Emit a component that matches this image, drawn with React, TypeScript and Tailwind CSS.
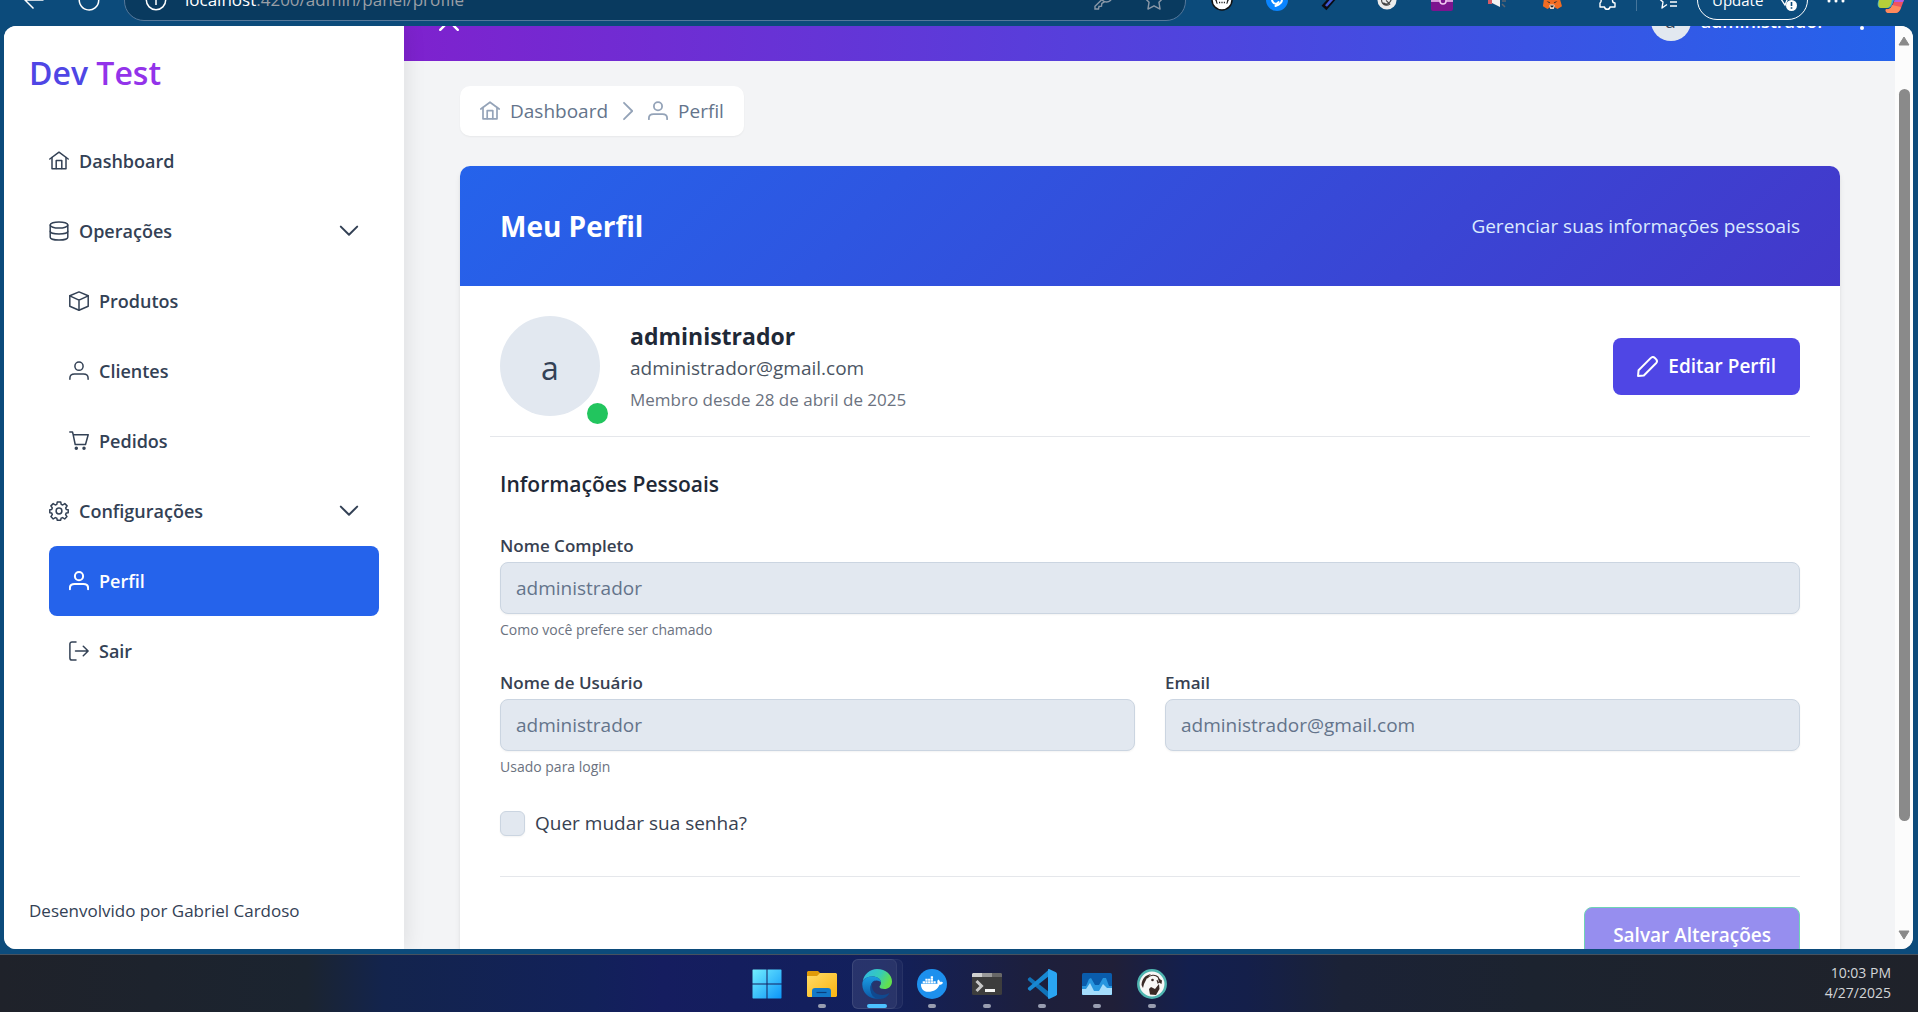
import type { ReactNode } from "react";
import { FaDocker } from "react-icons/fa";

type IconProps = { className?: string; d: ReactNode; width?: number };

function Glyph({ className = "size-5", d, width = 1.5 }: IconProps) {
  return (
    <svg viewBox="0 0 20 20" fill="none" stroke="currentColor" strokeWidth={width} strokeLinecap="round" strokeLinejoin="round" className={"shrink-0 " + className} aria-hidden="true">
      {d}
    </svg>
  );
}

const home = (
  <>
    <path d="M.8 8 10 1.2 19.2 8" />
    <path d="M3 6.6V17.8H17V6.6" />
    <path d="M7.2 17.6V9.6h5.6v8" />
  </>
);
const database = (
  <>
    <ellipse cx="10" cy="4" rx="8.8" ry="3.1" />
    <path d="M1.2 4v12.2c0 1.600 3.900 2.900 8.800 2.900s8.800-1.300 8.800-2.900V4" />
    <path d="M1.200 10.200c0 1.600 3.900 2.800 8.800 2.800s8.800-1.200 8.800-2.800" />
  </>
);
const box = (
  <>
    <path d="M10 .9 19.200 4.800v10.400L10 19.200.8 15.200V4.800z" />
    <path d="M.8 4.900 10 9.100l9.200-4.200M10 9.100v10" />
  </>
);
const user = (
  <>
    <circle cx="10" cy="5.200" r="4.100" />
    <path d="M.9 18.200v-1.100c0-2.500 2.100-4 4.700-4h8.800c2.600 0 4.700 1.500 4.700 4v1.100" />
  </>
);
const cart = (
  <>
    <path d="M.8 1h2.700l.6 2.300L6.200 13.500H16.500L19.200 3.700H4.200" />
    <circle cx="7.300" cy="17.300" r="1" fill="currentColor" />
    <circle cx="15" cy="17.300" r="1" fill="currentColor" />
  </>
);
const cog = (
  <>
    <circle cx="10" cy="10" r="2.900" />
    <path d="M8.300.9h3.400l.5 2.500 1.500.6 2.100-1.400 2.300 2.300L16.700 7l.6 1.500 1.900.3v2.900l-2 .4-.6 1.500 1.400 2-2.300 2.400-2.100-1.400-1.500.6-.4 2H8.300l-.5-2-1.500-.6L4.200 18l-2.300-2.400 1.400-2-.6-1.500-1.900-.4V8.800l1.900-.3L3.300 7 1.900 4.900l2.300-2.300L6.300 4l1.500-.6z" />
  </>
);
const signOut = (
  <>
    <path d="M7 .9H3C1.800.9.900 1.800.900 3v14c0 1.200.9 2.100 2.100 2.100h4" />
    <path d="M6.500 10H19M14.300 5.200 19.100 10l-4.800 4.800" />
  </>
);
const pencil = <path d="M1 19l.5-5.500L13 2c1.300-1.300 2.800-1.200 4-.1l1.100 1.100c1.200 1.200 1.200 2.600 0 3.900L6.500 18.500z" />;
const chevronDown = <path d="M1.800 5.600 10 13.700l8.200-8.100" />;
const chevronRight = <path d="M6 1.800 14.200 10 6 18.200" />;

function NavItem({ icon, label, kind }: { icon: ReactNode; label: string; kind?: "group" | "child" | "active" }) {
  const inner = (
    <>
      <Glyph d={icon} width={kind === "active" ? 2 : 1.5} />
      <span className="flex-1 text-left">{label}</span>
    </>
  );
  if (kind === "group") {
    return (
      <li>
        <button type="button" className="flex h-[70px] w-full items-center gap-[10px] pr-5">
          {inner}
          <Glyph d={chevronDown} width={2} />
        </button>
      </li>
    );
  }
  if (kind === "active") {
    return (
      <li>
        <a href="#perfil" aria-current="page" className="flex h-[70px] items-center gap-[10px] rounded-lg bg-[#2563eb] px-5 text-white">
          {inner}
        </a>
      </li>
    );
  }
  return (
    <li>
      <a href={"#" + label.toLowerCase()} className={kind === "child" ? "flex h-[70px] items-center gap-[10px] px-5" : "flex h-[70px] items-center gap-[10px]"}>
        {inner}
      </a>
    </li>
  );
}

function Field({ id, label, value, hint }: { id: string; label: string; value: string; hint?: string }) {
  return (
    <div className="min-w-0">
      <label htmlFor={id} className="block text-[17px] leading-6 font-semibold text-[#374151]">
        {label}
      </label>
      <input id={id} disabled defaultValue={value} className="mt-1 block h-[52px] w-full rounded-lg border border-[#cbd5e1] bg-[#e2e8f0] px-[15px] text-[19px] text-[#64748b] shadow-xs" />
      {hint && <p className="mt-[5px] text-[14px] leading-[21px] text-[#6b7280]">{hint}</p>}
    </div>
  );
}

function ExtCell({ label, children }: { label: string; children: ReactNode }) {
  return (
    <button type="button" aria-label={label} className="flex w-[55px] shrink-0 items-center justify-center">
      {children}
    </button>
  );
}

function BrowserBar() {
  return (
    <div className="h-[26px] shrink-0 overflow-hidden bg-[#0c4b7b]">
      <div className="-mt-[26px] flex h-[52px] items-center text-white">
        <button type="button" aria-label="Back" className="ml-6">
          <svg viewBox="0 0 20 20" className="size-5" fill="none" stroke="currentColor" strokeWidth="1.500"><path d="M19.500 10H1M9.500 1.500 1 10l8.500 8.500" /></svg>
        </button>
        <button type="button" aria-label="Reload" className="ml-[34px]">
          <svg viewBox="0 0 22 22" className="size-[22px]" fill="none" stroke="currentColor" strokeWidth="1.500"><path d="M18 4.500A9.700 9.700 0 1 0 20.700 11M18.500 0v5h-5" /></svg>
        </button>
        <div className="ml-6 flex h-[42px] min-w-0 flex-1 items-center rounded-[20px] border border-[#56789a] bg-[#093a5f] pr-[20px] pl-5">
          <svg viewBox="0 0 22 22" className="size-[22px] shrink-0" fill="none" stroke="currentColor" strokeWidth="1.500"><circle cx="11" cy="11" r="9.700" /><path d="M11 10v6M11 6v1.500" /></svg>
          <span className="ml-[18px] flex-1 text-[17px] whitespace-nowrap">
            localhost<span className="text-[#9a9fa6]">:4200/admin/panel/profile</span>
          </span>
          <svg viewBox="0 0 20 20" className="mr-[30px] size-5" fill="none" stroke="#8a98a8" strokeWidth="1.400"><circle cx="13.500" cy="6.500" r="5.500" /><path d="M9 9.500 2 16.200V19h3.500l.5-2.500 2.500-.3.300-2.700 2.700-1.700" /></svg>
          <svg viewBox="0 0 20 20" className="size-[22px]" fill="none" stroke="#8a98a8" strokeWidth="1.300" strokeLinejoin="round"><path d="m10 1 2.800 5.700 6.200.9-4.500 4.400 1 6.200L10 15.300l-5.500 2.900 1-6.200L1 7.600l6.200-.9z" /></svg>
        </div>
        <div className="ml-2 flex shrink-0 items-center">
          <ExtCell label="JSON viewer">
            <svg viewBox="0 0 22 22" className="size-[22px]"><circle cx="11" cy="11" r="10" fill="#fff" stroke="#111" strokeWidth="1.500" /><path d="M6.500 8.500c-1 0-.5 2-1.500 3 1 1 .5 3 1.500 3M15.500 8.500c1 0 .5 2 1.500 3-1 1-.5 3-1.500 3" fill="none" stroke="#222" strokeWidth="1.200" /><path d="M8 13.500h1.200m1.200 0h1.200m1.200 0H14" stroke="#222" strokeWidth="1.500" /></svg>
          </ExtCell>
          <ExtCell label="Shazam">
            <svg viewBox="0 0 22 22" className="size-[22px]"><circle cx="11" cy="11" r="11" fill="#0a84ff" /><path d="M12.500 5C8 6.500 5 9.500 6.500 12.500S11 15 12.500 13M9.500 17c4.500-1.500 7.500-4.500 6-7.500S11 7 9.500 9" fill="none" stroke="#fff" strokeWidth="2" strokeLinecap="round" /></svg>
          </ExtCell>
          <ExtCell label="Color picker">
            <svg viewBox="0 0 22 22" className="size-[22px]"><path d="M3 19 17 3" stroke="#0b0b12" strokeWidth="6.500" /><path d="M5 17 13 8" stroke="#4258d6" strokeWidth="2.600" /></svg>
          </ExtCell>
          <ExtCell label="Grammar checker">
            <svg viewBox="0 0 22 22" className="size-5"><circle cx="11" cy="11" r="10.500" fill="#ececec" /><path d="M15 8a5.500 5.500 0 1 0-1 7.500l-4-4M7 14c3 3 8 1 9-5" fill="none" stroke="#444" strokeWidth="1.300" /></svg>
          </ExtCell>
          <ExtCell label="Clipper">
            <svg viewBox="0 0 22 22" className="size-[22px]"><rect width="22" height="22" rx="2" fill="#7d148f" /><path d="M0 12h22V2H0z" fill="#a326ae" /><path d="M0 12h22" stroke="#f0c8f0" strokeWidth="1.500" /><circle cx="12" cy="12" r="3" fill="#7d148f" stroke="#f0c8f0" strokeWidth="1.500" /></svg>
          </ExtCell>
          <ExtCell label="Volume">
            <svg viewBox="0 0 22 22" className="size-[22px]"><path d="M2 8h4v7H2z" fill="#d65b65" /><path d="M6 8 14 2v16l-8-4z" fill="#f4f1f1" /><path d="m16 8 4-2m-4 6h4m-4 3 3 3" stroke="#5c6470" strokeWidth="1.500" /></svg>
          </ExtCell>
          <ExtCell label="Wallet">
            <svg viewBox="0 0 22 22" className="size-5"><path d="m1 1 7 4h6l7-4-1 10 2 7-5 3-3-2h-5l-3 2-5-3 1-7z" fill="#f26c22" /><path d="m5 12 4 1.500-1 1zm12 0-4 1.500 1 1z" fill="#2a2a2a" /><path d="m8 17 1-1h4l1 1-1 4H9z" fill="#e8d6c8" /><path d="M9 17h4l-1 2h-2z" fill="#222" /></svg>
          </ExtCell>
          <ExtCell label="Extensions">
            <svg viewBox="0 0 22 22" className="size-[22px]" fill="none" stroke="#fff" strokeWidth="1.400" strokeLinejoin="round"><path d="M3 4h5a3 3 0 0 1 6 0h5v5a2.500 2.500 0 0 0 0 5v4h-5a2.800 2.800 0 0 1-5.500 0H4v-4a2.800 2.800 0 0 0-1-5z" /></svg>
          </ExtCell>
          <div className="mx-[2px] h-[22px] w-px bg-[#46759b]" />
          <ExtCell label="Favorites">
            <svg viewBox="0 0 22 22" className="size-[22px]" fill="none" stroke="#fff" strokeWidth="1.400" strokeLinejoin="round"><path d="M11 15.500 6 19l1-6-5-4.500 6-1L11 2l3 5 6 1M14 13h7M14 17h7" /></svg>
          </ExtCell>
          <button type="button" className="ml-[3px] flex h-10 w-[111px] items-center justify-between rounded-full border border-white pr-[9px] pl-[14px] text-[15px]">
            Update
            <svg viewBox="0 0 24 24" className="size-6"><path d="M2 8 12 3l7 6M5 8l6 9 4-10" fill="none" stroke="#fff" strokeWidth="1.300" /><circle cx="17.500" cy="17.500" r="5.500" fill="#fff" /><path d="M17.500 14v4m0 1.300v1.500" stroke="#0c4b7b" strokeWidth="1.600" /></svg>
          </button>
          <ExtCell label="More">
            <svg viewBox="0 0 20 20" className="size-5" fill="#fff"><circle cx="3" cy="11" r="1.500" /><circle cx="10" cy="11" r="1.500" /><circle cx="17" cy="11" r="1.500" /></svg>
          </ExtCell>
          <ExtCell label="Copilot">
            <svg viewBox="0 0 28 28" className="size-7"><path d="M8 2h9c3 0 3 3 2 6l-3 9c-1 3-3 5-6 5H4c-3 0-4-3-3-6L4 6c1-2 2-4 4-4z" fill="#3fa9d6" /><path d="M2 14h13l-1 4c-1 2-2 4-5 4H4c-3 0-3-4-2-8z" fill="#b5cf3a" /><path d="M20 8h4c3 0 4 3 3 6l-3 8c-1 3-3 5-6 5h-6c-3 0-4-2-3-4h2c3 0 4-2 5-5z" fill="#f0525f" /><path d="M20 8h4c3 0 4 3 3 6l-1 2h-9z" fill="#b05de5" /><path d="M9 23c3 1 5-1 6-4l9 2c-1 4-3 6-6 6h-6c-3 0-4-2-3-4z" fill="#ff8a5c" /></svg>
          </ExtCell>
        </div>
      </div>
    </div>
  );
}

function Sidebar() {
  return (
    <aside className="z-10 flex w-[400px] shrink-0 flex-col bg-white pr-[25px] pb-[26px] pl-[25px] text-[#334155] shadow-[4px_0_18px_rgba(0,0,0,0.08)]">
      <h1 className="mt-[22px] text-[32px] leading-[50px] font-semibold">
        <span className="text-[#4f46e5]">Dev</span> <span className="text-[#9333ea]">Test</span>
      </h1>
      <nav className="mt-7 pl-5 text-[18px] font-semibold">
        <ul>
          <NavItem icon={home} label="Dashboard" />
          <NavItem icon={database} label="Operações" kind="group" />
          <NavItem icon={box} label="Produtos" kind="child" />
          <NavItem icon={user} label="Clientes" kind="child" />
          <NavItem icon={cart} label="Pedidos" kind="child" />
          <NavItem icon={cog} label="Configurações" kind="group" />
          <NavItem icon={user} label="Perfil" kind="active" />
          <NavItem icon={signOut} label="Sair" kind="child" />
        </ul>
      </nav>
      <p className="mt-auto text-[17px] leading-6">Desenvolvido por Gabriel Cardoso</p>
    </aside>
  );
}

function TopBar() {
  return (
    <header className="flex h-20 items-center bg-[linear-gradient(90deg,#7e22ce,#2563eb)] pr-[28px] pl-[34px] text-white">
      <button type="button" aria-label="Fechar menu">
        <Glyph className="size-[22px]" width={2.2} d={<path d="m2 2 16 16M18 2 2 18" />} />
      </button>
      <div className="ml-auto flex items-center gap-[10px]">
        <span className="flex size-10 items-center justify-center rounded-full bg-[#e2e8f0] text-[19px] text-[#334155]">a</span>
        <span className="text-[18px] font-semibold">administrador</span>
        <button type="button" aria-label="Opções" className="ml-[22px]">
          <svg viewBox="0 0 10 20" className="h-5 w-[10px]" fill="currentColor"><circle cx="5" cy="3" r="2" /><circle cx="5" cy="10" r="2" /><circle cx="5" cy="17" r="2" /></svg>
        </button>
      </div>
    </header>
  );
}

function ProfileCard() {
  return (
    <section className="mt-[30px] rounded-[10px] bg-white pb-10 shadow-md">
      <div className="flex h-[120px] items-center justify-between rounded-t-[10px] bg-[linear-gradient(135deg,#2563eb,#4338ca)] px-10">
        <h2 className="text-[28px] font-bold text-white">Meu Perfil</h2>
        <p className="text-[19px] text-[#dbeafe]">Gerenciar suas informações pessoais</p>
      </div>
      <div className="px-[30px] pt-[30px]">
        <div className="flex items-center border-b border-[#e5e7eb] px-[10px] pb-5">
          <div className="relative flex size-[100px] shrink-0 items-center justify-center rounded-full bg-[#e2e8f0] pt-1 text-[32px] text-[#334155]">
            a
            <span className="absolute -right-2 -bottom-2 size-[21px] rounded-full bg-[#22c55e]" />
          </div>
          <div className="ml-[30px] flex-1 pt-1">
            <h3 className="text-[23px] leading-8 font-bold text-[#1f2937]">administrador</h3>
            <p className="text-[19px] leading-8 text-[#4b5563]">administrador@gmail.com</p>
            <p className="text-[17px] leading-8 text-[#6b7280]">Membro desde 28 de abril de 2025</p>
          </div>
          <button type="button" className="flex h-[57px] items-center gap-[10px] rounded-lg bg-[#4f46e5] px-6 text-[19px] font-semibold text-white">
            <Glyph d={pencil} className="size-[21px]" width={1.9} />
            Editar Perfil
          </button>
        </div>
        <form className="px-[10px]">
          <h4 className="mt-[33px] text-[21px] leading-7 font-semibold text-[#1f2937]">Informações Pessoais</h4>
          <div className="mt-9">
            <Field id="nome" label="Nome Completo" value="administrador" hint="Como você prefere ser chamado" />
          </div>
          <div className="mt-[31px] grid grid-cols-2 gap-[30px]">
            <Field id="usuario" label="Nome de Usuário" value="administrador" hint="Usado para login" />
            <Field id="email" label="Email" value="administrador@gmail.com" />
          </div>
          <div className="mt-[34px] flex h-[25px] items-center gap-[10px]">
            <input id="senha" type="checkbox" disabled className="size-[25px] appearance-none rounded-md border border-[#cbd5e1] bg-[#e2e8f0] shadow-xs" />
            <label htmlFor="senha" className="text-[19px] leading-[23px] text-[#374151]">
              Quer mudar sua senha?
            </label>
          </div>
          <div className="mt-10 flex justify-end border-t border-[#e5e7eb] pt-[30px]">
            <button type="submit" disabled className="h-[57px] rounded-lg border border-[#6fd3b5] bg-[#968eef] px-[28px] text-[19px] font-semibold text-white">
              Salvar Alterações
            </button>
          </div>
        </form>
      </div>
    </section>
  );
}

function Task({ label, children, active }: { label: string; children: ReactNode; active?: boolean }) {
  return (
    <button type="button" aria-label={label} className="relative flex h-[50px] w-[55px] items-center justify-center">
      {active && (
        <>
          <span className="absolute inset-y-0 right-[1px] left-[3px] rounded-md border border-white/5 bg-white/4" />
          <span className="absolute inset-y-0 right-[7px] left-[3px] rounded-md border border-white/5 bg-white/6" />
        </>
      )}
      <span className="relative">{children}</span>
      {label !== "Iniciar" && (
        <span className={active ? "absolute bottom-[1px] h-1 w-5 rounded-full bg-[#4cc2ff]" : "absolute bottom-[1px] h-1 w-2 rounded-full bg-[#989db0]"} />
      )}
    </button>
  );
}

function Taskbar() {
  return (
    <footer className="relative flex h-[58px] shrink-0 items-center justify-center border-t border-[#46525f] bg-[linear-gradient(90deg,#1f222a_0%,#1b2430_16%,#13244d_20%,#12215a_31%,#151d5f_34.500%,#12205c_46%,#1d1f3c_54%,#201f38_58%,#131f4e_62%,#141f4a_65%,#1b2236_70%,#1c232f_80%,#1f222a_100%)]">
      <Task label="Iniciar">
        <svg viewBox="0 0 30 30" className="size-[30px]"><defs><linearGradient id="win" gradientUnits="userSpaceOnUse" x1="0" y1="0" x2="30" y2="30"><stop stopColor="#74f0ff" /><stop offset="1" stopColor="#0a94f8" /></linearGradient></defs><path d="M1 .5h13.500v14H.5V1zM15.500.5h13.500l.5.500v13.500h-14zM.5 15.500h14v14H1l-.5-.5zM15.500 15.500h14V29l-.5.500h-13.500z" fill="url(#win)" /></svg>
      </Task>
      <Task label="Explorador de arquivos">
        <svg viewBox="0 0 30 30" className="size-[30px]"><defs><linearGradient id="fold" x1="0" y1="0" x2="1" y2="1"><stop stopColor="#ffdc68" /><stop offset="1" stopColor="#fbb410" /></linearGradient></defs><path d="M1 2h10l3 3-2 4H0V3z" fill="#e09a08" /><path d="M0 7h10l3-3h16l1 1v22l-1 1H1l-1-1z" fill="url(#fold)" /><path d="M5 28v-6c0-2 1-3 3-3h13c2 0 3 1 3 3v6z" fill="#1379c8" /><path d="M9.500 23.500h10" stroke="#0a3f7c" strokeWidth="1.200" /></svg>
      </Task>
      <Task label="Edge" active>
        <svg viewBox="0 0 30 30" className="size-[30px]">
          <defs>
            <linearGradient id="e1" x1="0" y1="0" x2="1" y2=".4"><stop stopColor="#2fb4ea" /><stop offset=".6" stopColor="#36ccb8" /><stop offset="1" stopColor="#62e04d" /></linearGradient>
            <linearGradient id="e2" x1="0" y1="0" x2="0" y2="1"><stop stopColor="#1b9de2" /><stop offset="1" stopColor="#0b59a8" /></linearGradient>
          </defs>
          <path d="M.8 12C2 5 8 0 15 0c9 0 15 6 15 12.500 0 5-4 7.500-7.500 7.500-3 0-5-1-5-2.300 0-1 1.500-1.500 1.500-4C19 10 15 7.500 10.500 7.500 6 7.500 2.500 9 .8 12z" fill="url(#e1)" />
          <path d="M.3 15C.3 10 5 7.500 10.500 7.500c5 0 8.500 2.500 8.500 6-.5-1-2-2-4.500-2-4 0-6 3.500-6 7.500 0 6 5 10 11 10.200C9 31.500 0 25 .3 15z" fill="url(#e2)" />
          <path d="M10 17c0 5 4 9 10 9 4 0 6-1.500 7.500-2-1.500 3-5 6-10 6C11 30 8 24 8.500 19c.2-4 2-7 5-7.500C11 13 10 14.500 10 17z" fill="#10498f" />
        </svg>
      </Task>
      <Task label="Docker">
        <span className="flex size-[30px] items-center justify-center rounded-full bg-[#1d90ee] text-white"><FaDocker className="size-[22px]" /></span>
      </Task>
      <Task label="Terminal">
        <svg viewBox="0 0 30 30" className="size-[30px]"><rect y="4" width="30" height="22" rx="1.500" fill="#3d3d3d" /><path d="M0 8V5l1-1h9v4z" fill="#d0d0d0" /><path d="M10 4h10v4H10z" fill="#9a9a9a" /><path d="M20 4h9l1 1v3H20z" fill="#686868" /><path d="m4.500 12 5 5-5 5" fill="none" stroke="#c8c8c8" strokeWidth="3" /><path d="M13 20h10v3H13z" fill="#f4f4f4" /></svg>
      </Task>
      <Task label="Visual Studio Code">
        <svg viewBox="0 0 30 30" className="size-[30px]"><path d="M1 9.500 3 8l19 15v6.500L.8 11z" fill="#1173b8" /><path d="M1 20.500 3 22 22 7V.500L.8 19z" fill="#1888d2" /><path d="M22 0l7 3.200 1 1.300v21l-1 1.300L22 30c-1 0-1-1-1-1.500v-27C21 .5 21 0 22 0z" fill="#2aa5f2" /></svg>
      </Task>
      <Task label="Monitor">
        <svg viewBox="0 0 30 30" className="size-[30px]"><rect y="4" width="30" height="22" rx="1.500" fill="#0a5cab" /><path d="M0 17h4l3-7 2-1 4 7 4 0 4-7h3l3 8h3v9H0z" fill="#2796df" /><path d="M0 20h4l4-6 4 8h5l4-7 4 4h5v6l-1 1H1l-1-1z" fill="#a4dcfb" /></svg>
      </Task>
      <Task label="DBeaver">
        <svg viewBox="0 0 30 30" className="size-[30px]"><circle cx="15" cy="15" r="13.700" fill="#f8f7f5" stroke="#4fb5b0" strokeWidth="2.500" /><path d="M4.500 16C5 9 9 6 14 5l-4 4-3 6-1 4z" fill="#3a2a25" /><path d="M10 9c3-3 8-4 11-1l2 4-2 2-1-3" fill="none" stroke="#3a2a25" strokeWidth="1.100" /><circle cx="15.500" cy="11" r="1.300" fill="#3a2a25" /><path d="m21 9 4 2.500-.5 3.500-2.500-1.500zM12 20l2-2 4 2 4-5 .5 5L19 26l-6-.5z" fill="#3a2a25" /></svg>
      </Task>
      <div className="absolute top-[8px] right-[27px] text-right text-[14px] leading-5 text-[#d3d5d8]">
        <p>10:03 PM</p>
        <p>4/27/2025</p>
      </div>
    </footer>
  );
}

export default function App() {
  return (
    <div className="flex h-screen flex-col overflow-hidden bg-[#0c4b7b] font-['Open_Sans',sans-serif]">
      <BrowserBar />
      <div className="mr-[5px] mb-[5px] ml-1 flex min-h-0 flex-1 overflow-hidden rounded-xl bg-[#f3f4f6]">
        <Sidebar />
        <div className="min-w-0 flex-1 overflow-hidden">
          <div className="-mt-[45px]">
            <TopBar />
            <main className="pt-[25px] pr-[55px] pl-14">
              <nav aria-label="Breadcrumb" className="flex h-[50px] w-fit items-center gap-[10px] rounded-[10px] bg-white px-5 text-[19px] text-[#64748b] shadow-xs">
                <a href="#dashboard" className="flex items-center gap-[10px]">
                  <Glyph d={home} className="size-5 text-[#94a3b8]" width={1.7} />
                  Dashboard
                </a>
                <Glyph d={chevronRight} className="size-5 text-[#94a3b8]" width={1.8} />
                <a href="#perfil" className="flex items-center gap-[10px]">
                  <Glyph d={user} className="size-5 text-[#94a3b8]" width={1.8} />
                  Perfil
                </a>
              </nav>
              <ProfileCard />
            </main>
          </div>
        </div>
        <div className="flex w-[18px] shrink-0 flex-col items-center justify-between bg-[#fcfcfc] pt-[10px] pb-[9px]" aria-hidden="true">
          <svg viewBox="0 0 12 10" className="h-[10px] w-3"><path d="M6 1 11 9H1z" fill="#8a8a8a" stroke="#8a8a8a" strokeLinejoin="round" /></svg>
          <div className="mt-[43px] mb-[109px] w-[11px] flex-1 rounded-full bg-[#8a8a8a]" />
          <svg viewBox="0 0 12 10" className="h-[10px] w-3"><path d="M6 9 11 1H1z" fill="#8a8a8a" stroke="#8a8a8a" strokeLinejoin="round" /></svg>
        </div>
      </div>
      <Taskbar />
    </div>
  );
}
